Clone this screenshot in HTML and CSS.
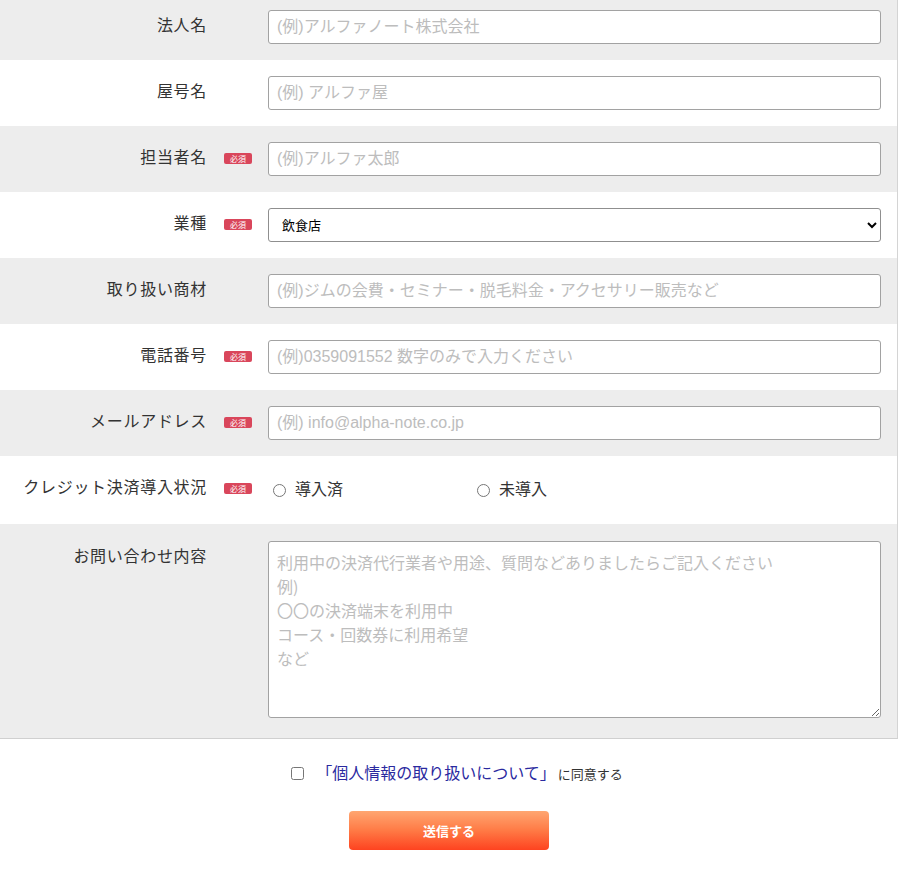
FILE: index.html
```html
<!DOCTYPE html>
<html lang="ja">
<head>
<meta charset="utf-8">
<title>お問い合わせ</title>
<link rel="stylesheet" href="styles.css">
</head>
<body>
<div class="page">
  <div class="form">
    <div class="row alt">
      <div class="label"><span class="name">法人名</span><span class="badge-slot"></span></div>
      <div class="field"><input class="text" type="text" placeholder="(例)アルファノート株式会社"></div>
    </div>
    <div class="row">
      <div class="label"><span class="name">屋号名</span><span class="badge-slot"></span></div>
      <div class="field"><input class="text" type="text" placeholder="(例) アルファ屋"></div>
    </div>
    <div class="row alt">
      <div class="label"><span class="name">担当者名</span><span class="badge-slot"><span class="badge">必須</span></span></div>
      <div class="field"><input class="text" type="text" placeholder="(例)アルファ太郎"></div>
    </div>
    <div class="row">
      <div class="label"><span class="name">業種</span><span class="badge-slot"><span class="badge">必須</span></span></div>
      <div class="field">
        <select class="select">
          <option>飲食店</option>
          <option>小売店</option>
          <option>サービス業</option>
        </select>
      </div>
    </div>
    <div class="row alt">
      <div class="label"><span class="name">取り扱い商材</span><span class="badge-slot"></span></div>
      <div class="field"><input class="text" type="text" placeholder="(例)ジムの会費・セミナー・脱毛料金・アクセサリー販売など"></div>
    </div>
    <div class="row">
      <div class="label"><span class="name">電話番号</span><span class="badge-slot"><span class="badge">必須</span></span></div>
      <div class="field"><input class="text" type="text" placeholder="(例)0359091552 数字のみで入力ください"></div>
    </div>
    <div class="row alt">
      <div class="label"><span class="name">メールアドレス</span><span class="badge-slot"><span class="badge">必須</span></span></div>
      <div class="field"><input class="text" type="text" placeholder="(例) info@alpha-note.co.jp"></div>
    </div>
    <div class="row radio-row">
      <div class="label"><span class="name">クレジット決済導入状況</span><span class="badge-slot"><span class="badge">必須</span></span></div>
      <div class="field radios">
        <label class="radio"><input type="radio" name="credit"><span>導入済</span></label>
        <label class="radio"><input type="radio" name="credit"><span>未導入</span></label>
      </div>
    </div>
    <div class="row alt area-row">
      <div class="label"><span class="name">お問い合わせ内容</span><span class="badge-slot"></span></div>
      <div class="field"><textarea class="area" placeholder="利用中の決済代行業者や用途、質問などありましたらご記入ください
例)
〇〇の決済端末を利用中
コース・回数券に利用希望
など"></textarea></div>
    </div>
  </div>
  <div class="consent">
    <label class="agree"><input type="checkbox"><a class="policy" href="#">「個人情報の取り扱いについて」</a><span class="small">に同意する</span></label>
  </div>
  <div class="submit-wrap">
    <button class="submit" type="button">送信する</button>
  </div>
</div>
</body>
</html>
```

FILE: styles.css
```css
body {
  margin: 0;
  background: #fff;
  color: #333;
  font-family: "Liberation Sans", "Noto Sans CJK JP", sans-serif;
}

.page {
  width: 898px;
  margin-top: -6px;
}

.form {
  border-right: 1px solid #d4d4d4;
  border-bottom: 1px solid #d0d0d0;
}

.row {
  display: grid;
  grid-template-columns: 268px 613px;
  padding: 16px 0;
}

.row.alt {
  background: #ededed;
}

.label {
  display: flex;
  justify-content: flex-end;
  align-items: flex-start;
  padding-right: 16px;
  font-size: 16px;
  line-height: 28px;
  color: #333;
  font-family: "Noto Sans CJK JP", sans-serif;
}

.name {
  letter-spacing: 0.7px;
}

.badge-slot {
  width: 45px;
  height: 32px;
  display: flex;
  justify-content: flex-end;
  align-items: center;
}

.badge {
  display: block;
  width: 28px;
  height: 11px;
  background: #d9465b;
  border-radius: 2px;
  color: #fff;
  font-size: 8px;
  line-height: 11px;
  text-align: center;
  font-family: "Noto Sans CJK JP", sans-serif;
}

.field {
  display: flex;
  align-items: flex-start;
}

.text {
  box-sizing: border-box;
  width: 613px;
  height: 34px;
  margin: 0;
  padding: 0 8px;
  border: 1px solid #a2a2a2;
  border-radius: 3px;
  background: #fff;
  font-family: "Liberation Sans", "Noto Sans CJK JP", sans-serif;
  font-size: 16px;
  color: #333;
}

.text::placeholder,
.area::placeholder {
  color: #bdbdbd;
}

.select {
  box-sizing: border-box;
  width: 613px;
  height: 34px;
  margin: 0;
  padding: 0 6px 2px 9px;
  border: 1px solid #8f8f8f;
  border-radius: 3px;
  background: #fff;
  font-family: "Noto Sans CJK JP", sans-serif;
  font-size: 13px;
  color: #000;
}

.radio-row {
  padding: 16px 0 20px;
}

.radios {
  display: flex;
  height: 32px;
  align-items: center;
  padding-left: 4px;
}

.radio {
  display: flex;
  align-items: center;
  width: 204px;
  font-size: 16px;
  color: #333;
  font-family: "Noto Sans CJK JP", sans-serif;
}

.radio input {
  width: 13px;
  height: 13px;
  margin: 4px 9px 0 1px;
}

.area-row {
  padding: 17px 0 20px;
}

.area {
  box-sizing: border-box;
  width: 613px;
  height: 177px;
  margin: 0;
  padding: 8px 8px;
  border: 1px solid #a2a2a2;
  border-radius: 3px;
  background: #fff;
  font-family: "Noto Sans CJK JP", sans-serif;
  font-size: 16px;
  line-height: 24px;
  color: #333;
  resize: both;
}

.consent {
  display: flex;
  justify-content: center;
  padding: 21px 0 0 16px;
}

.agree {
  display: flex;
  align-items: center;
  height: 24px;
}

.agree input {
  width: 13px;
  height: 13px;
  margin: 2px 12px 0 0;
}

.policy {
  color: #2b2a9f;
  text-decoration: none;
  font-size: 16px;
  font-family: "Noto Sans CJK JP", sans-serif;
}

.small {
  margin-left: 2px;
  margin-top: 2px;
  font-size: 13px;
  color: #333;
  font-family: "Noto Sans CJK JP", sans-serif;
}

.submit-wrap {
  display: flex;
  justify-content: center;
  padding-top: 27px;
}

.submit {
  width: 200px;
  height: 39px;
  border: none;
  border-radius: 4px;
  background: linear-gradient(to bottom, #ffa671 0%, #ff7a45 50%, #fe4320 100%);
  color: #fff;
  font-family: "Noto Sans CJK JP", sans-serif;
  font-size: 13px;
  font-weight: bold;
  cursor: pointer;
}
```
